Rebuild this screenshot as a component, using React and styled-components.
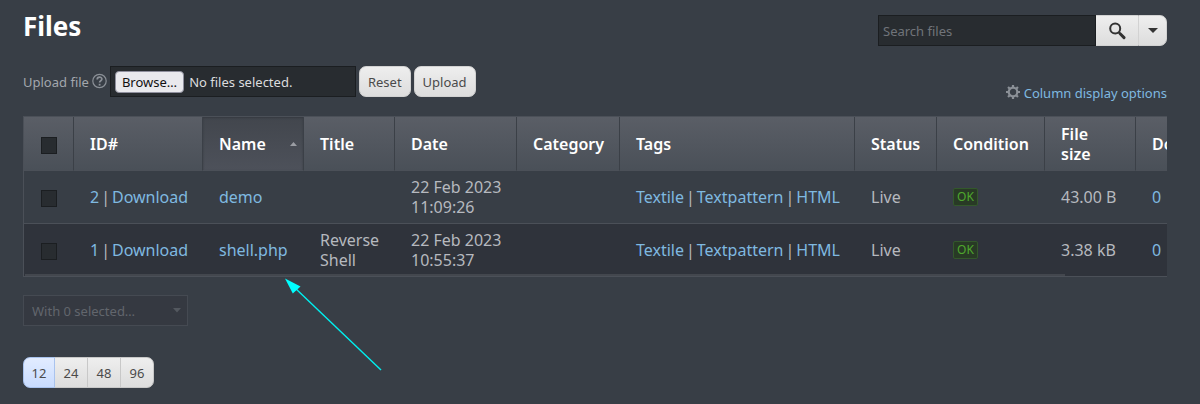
import React, { useState } from 'react';
import styled, { createGlobalStyle, css } from 'styled-components';

const GlobalStyle = createGlobalStyle`
  *, *::before, *::after { box-sizing: border-box; }
  body {
    margin: 0;
    background: #383e46;
    color: #b6b9bf;
    font-family: "Noto Sans", "Open Sans", sans-serif;
    font-size: 13px;
    line-height: 20px;
  }
  button, input, select { font: inherit; }
`;

const Page = styled.main`
  position: relative;
  padding: 15px 33px 16px 23px;
`;

const TopBar = styled.header`
  display: flex;
  justify-content: space-between;
  align-items: flex-start;
  margin-bottom: 20px;
`;

const Title = styled.h1`
  margin: 0;
  color: #fff;
  font-size: 26px;
  font-weight: 700;
  line-height: 22px;
`;

const SearchForm = styled.form`
  display: flex;
  height: 31px;
`;

const SearchInput = styled.input`
  width: 218px;
  padding: 0 4px;
  border: 1px solid #1b1e21;
  border-radius: 0;
  background: #282c30;
  color: #ddd;
  &::placeholder { color: #70747a; opacity: 1; }
`;

const lightButton = css`
  border: 1px solid #d2d2d2;
  background: linear-gradient(#eeeeee, #dddddd);
  color: #4a4a4a;
  cursor: pointer;
`;

const Button = styled.button`
  ${lightButton}
  height: 31px;
  padding: 0 8px;
  border-radius: 7px;
`;

const SearchButton = styled.button`
  ${lightButton}
  display: flex;
  align-items: center;
  justify-content: center;
  width: ${(p) => (p.$last ? 29 : 42)}px;
  padding: 0;
  border-left-width: ${(p) => (p.$last ? 1 : 0)}px;
  border-right-width: ${(p) => (p.$last ? 1 : 0)}px;
  border-radius: ${(p) => (p.$last ? '0 7px 7px 0' : '0')};
  color: #333;
`;

const Tools = styled.div`
  display: flex;
  justify-content: space-between;
  align-items: flex-start;
  margin-bottom: 13px;
`;

const UploadForm = styled.form`
  display: flex;
  align-items: center;
  gap: 3px;
`;

const UploadLabel = styled.label`
  color: #a3a7ad;
`;

const HelpButton = styled.button`
  display: flex;
  padding: 0;
  border: 0;
  background: none;
  color: #8b9097;
`;

const FileField = styled.label`
  position: relative;
  display: flex;
  align-items: center;
  gap: 5px;
  width: 246px;
  height: 31px;
  padding: 0 4px;
  border: 1px solid #1b1e21;
  background: #282c30;
  color: #dcdcde;
`;

const FileInput = styled.input`
  position: absolute;
  inset: 0;
  width: 100%;
  opacity: 0;
`;

const Browse = styled.span`
  padding: 0 6px;
  border: 1px solid #8f8f9d;
  border-radius: 4px;
  background: #e9e9ed;
  color: #111;
`;

const OptionsLink = styled.a`
  display: flex;
  align-items: center;
  gap: 4px;
  margin-top: 17px;
  color: #7fb9e0;
  text-decoration: none;
`;

const Scroller = styled.div`
  position: relative;
  overflow: hidden;
  border: 1px solid #4b5058;
  border-right: 0;
  margin-bottom: 18px;
`;

const ScrollThumb = styled.div`
  position: absolute;
  left: 1px;
  bottom: 0;
  width: 91%;
  height: 2px;
  background: #43474e;
`;

const Table = styled.table`
  width: 1255px;
  table-layout: fixed;
  border-collapse: separate;
  border-spacing: 0;
  font-size: 16px;
`;

const Col = styled.col`
  width: ${(p) => p.$width}px;
`;

const HeadCell = styled.th`
  position: relative;
  height: 54px;
  padding: 6px 16px;
  border-right: 1px solid #3b4047;
  border-bottom: 1px solid #4b5058;
  background: ${(p) => (p.$sorted ? 'linear-gradient(#42464d, #4d515a)' : 'linear-gradient(#5a5e66, #4a5058)')};
  box-shadow: ${(p) => (p.$sorted ? 'inset 0 1px 2px #363a41' : 'none')};
  color: #fff;
  font-weight: 600;
  text-align: left;
`;

const SortMark = styled.svg`
  position: absolute;
  right: 6px;
  top: 25px;
`;

const Row = styled.tr`
  background: ${(p) => (p.$dark ? '#2f333b' : '#383e46')};
`;

const Cell = styled.td`
  height: ${(p) => (p.$last ? 52 : 53)}px;
  padding: 6px 16px;
  border-bottom: ${(p) => (p.$last ? 0 : 1)}px solid #4b5058;
  white-space: ${(p) => (p.$wrap ? 'normal' : 'nowrap')};
`;

const Line = styled.span`
  display: block;
`;

const Divider = styled.span`
  margin: 0 2px;
  &::before { content: "|"; }
`;

const Checkbox = styled.input`
  appearance: none;
  display: block;
  width: 16px;
  height: 17px;
  margin: 3px 0 0 1px;
  border: 1px solid #1b1e21;
  background: #282c30;
  &:checked { background: #7fb9e0; }
`;

const Link = styled.a`
  color: #7fb9e0;
  text-decoration: none;
`;

const Status = styled.span`
  display: block;
  width: 25px;
  border: 1px solid #33582b;
  border-radius: 2px;
  background: #283a25;
  color: #4fa72e;
  font-size: 12px;
  line-height: 16px;
  text-align: center;
`;

const SelectBox = styled.div`
  display: grid;
  align-items: center;
  width: 165px;
  margin-bottom: 31px;
  color: #53585f;
  & > * { grid-area: 1 / 1; }
  & > svg { justify-self: end; margin-right: 7px; }
`;

const Select = styled.select`
  appearance: none;
  width: 100%;
  height: 31px;
  padding: 0 8px;
  border: 1px solid #454a52;
  border-radius: 0;
  background: #353941;
  color: #62666d;
  opacity: 1;
`;

const Pager = styled.nav`
  display: flex;
`;

const PageSize = styled.button`
  ${lightButton}
  width: 34px;
  height: 31px;
  padding: 0;
  margin-left: -1px;
  border-color: #c8c8c8;
  &:first-child { width: 32px; border-radius: 7px 0 0 7px; margin-left: 0; }
  &:last-child { border-radius: 0 7px 7px 0; }
  ${(p) => p.$active && css`
    z-index: 1;
    border-color: #a9c3ee;
    background: linear-gradient(#e2ecff, #c9dcff);
  `}
`;

const Arrow = styled.svg`
  position: absolute;
  left: 284px;
  top: 277px;
  pointer-events: none;
`;

const Caret = () => (
  <svg width="10" height="5" viewBox="0 0 10 5" fill="currentColor" aria-hidden="true">
    <path d="M0 0h10L5 5z" />
  </svg>
);

const SmallCaret = () => (
  <svg width="8" height="5" viewBox="0 0 8 5" fill="currentColor" aria-hidden="true">
    <path d="M0 0h8L4 4.5z" />
  </svg>
);

const columns = [
  { label: 'ID#', width: 129 },
  { label: 'Name', width: 101, sorted: true },
  { label: 'Title', width: 91 },
  { label: 'Date', width: 122 },
  { label: 'Category', width: 103 },
  { label: 'Tags', width: 235 },
  { label: 'Status', width: 82 },
  { label: 'Condition', width: 108 },
  { label: 'File size', width: 91 },
  { label: 'Downloads', width: 143 },
];

const files = [
  { id: 2, name: 'demo', title: '', day: '22 Feb 2023', time: '11:09:26', size: '43.00 B' },
  { id: 1, name: 'shell.php', title: 'Reverse Shell', day: '22 Feb 2023', time: '10:55:37', size: '3.38 kB' },
];

export default function App() {
  const [pageSize, setPageSize] = useState(12);
  return (
    <Page>
      <GlobalStyle />
      <TopBar>
        <Title>Files</Title>
        <SearchForm role="search" onSubmit={(e) => e.preventDefault()}>
          <SearchInput type="text" placeholder="Search files" aria-label="Search files" />
          <SearchButton type="submit" aria-label="Search">
            <svg width="18" height="18" viewBox="0 0 18 18" fill="none" stroke="currentColor" aria-hidden="true">
              <circle cx="7.2" cy="6.6" r="5" strokeWidth="2" />
              <path d="M10.6 10.2l1.6 1.6" strokeWidth="2" />
              <path d="M12.2 11.8l3.8 3.8" strokeWidth="3" strokeLinecap="round" />
            </svg>
          </SearchButton>
          <SearchButton type="button" $last aria-label="Search options"><Caret /></SearchButton>
        </SearchForm>
      </TopBar>

      <Tools>
        <UploadForm onSubmit={(e) => e.preventDefault()}>
          <UploadLabel htmlFor="upload">Upload file</UploadLabel>
          <HelpButton type="button" aria-label="Help">
            <svg width="15" height="18" viewBox="0 0 15 18" fill="none" stroke="currentColor" aria-hidden="true">
              <circle cx="7.5" cy="8" r="6.7" strokeWidth="1.2" />
              <path d="M5.2 6.4c0-3 4.7-3 4.7-.3 0 1.7-2.3 1.7-2.3 3.5" strokeWidth="1.7" />
              <path d="M7.6 10.8v1.8" strokeWidth="1.8" />
            </svg>
          </HelpButton>
          <FileField>
            <FileInput id="upload" type="file" />
            <Browse>Browse…</Browse>
            No files selected.
          </FileField>
          <Button type="reset">Reset</Button>
          <Button type="submit">Upload</Button>
        </UploadForm>
        <OptionsLink href="#columns">
          <svg width="14" height="16" viewBox="0 0 14 16" fill="none" stroke="#8b9097" aria-hidden="true">
            <circle cx="7" cy="7" r="4.3" strokeWidth="2.2" />
            <path
              d="M7 0v2.4M7 11.6V14M0 7h2.4M11.6 7H14M2.05 2.05l1.7 1.7M10.25 10.25l1.7 1.7M2.05 11.95l1.7-1.7M10.25 3.75l1.7-1.7"
              strokeWidth="2.2"
            />
          </svg>
          Column display options
        </OptionsLink>
      </Tools>

      <Scroller>
        <Table>
          <colgroup>
            <Col $width={50} />
            {columns.map((c) => <Col key={c.label} $width={c.width} />)}
          </colgroup>
          <thead>
            <tr>
              <HeadCell><Checkbox type="checkbox" aria-label="Select all files" /></HeadCell>
              {columns.map((c) => (
                <HeadCell key={c.label} $sorted={c.sorted} scope="col">
                  {c.label}
                  {c.sorted && (
                    <SortMark width="7" height="4" viewBox="0 0 7 4" fill="#9a9da3" aria-hidden="true">
                      <path d="M0 4h7L3.5 0z" />
                    </SortMark>
                  )}
                </HeadCell>
              ))}
            </tr>
          </thead>
          <tbody>
            {files.map((f, i) => {
              const last = i === files.length - 1;
              return (
                <Row key={f.id} $dark={i % 2 === 1}>
                  <Cell $last={last}><Checkbox type="checkbox" aria-label={`Select ${f.name}`} /></Cell>
                  <Cell $last={last}><Link href="#edit">{f.id}</Link><Divider /><Link href="#download">Download</Link></Cell>
                  <Cell $last={last}><Link href="#edit">{f.name}</Link></Cell>
                  <Cell $last={last} $wrap>{f.title}</Cell>
                  <Cell $last={last}><Line>{f.day}</Line><Line>{f.time}</Line></Cell>
                  <Cell $last={last} />
                  <Cell $last={last}>
                    <Link href="#textile">Textile</Link><Divider /><Link href="#textpattern">Textpattern</Link><Divider /><Link href="#html">HTML</Link>
                  </Cell>
                  <Cell $last={last}>Live</Cell>
                  <Cell $last={last}><Status>OK</Status></Cell>
                  <Cell $last={last}>{f.size}</Cell>
                  <Cell $last={last}><Link href="#downloads">0</Link></Cell>
                </Row>
              );
            })}
          </tbody>
        </Table>
        <ScrollThumb />
      </Scroller>

      <SelectBox>
        <Select disabled aria-label="With selected files">
          <option>With 0 selected…</option>
        </Select>
        <SmallCaret />
      </SelectBox>

      <Pager aria-label="Files per page">
        {[12, 24, 48, 96].map((n) => (
          <PageSize key={n} type="button" $active={n === pageSize} onClick={() => setPageSize(n)}>{n}</PageSize>
        ))}
      </Pager>

      <Arrow width="100" height="96" viewBox="0 0 100 96" aria-hidden="true">
        <path d="M10 10L97 93" stroke="#00f0f0" strokeWidth="1.4" />
        <path d="M1 1.5l15.5 8L8.8 16.5z" fill="#00ffff" />
      </Arrow>
    </Page>
  );
}
